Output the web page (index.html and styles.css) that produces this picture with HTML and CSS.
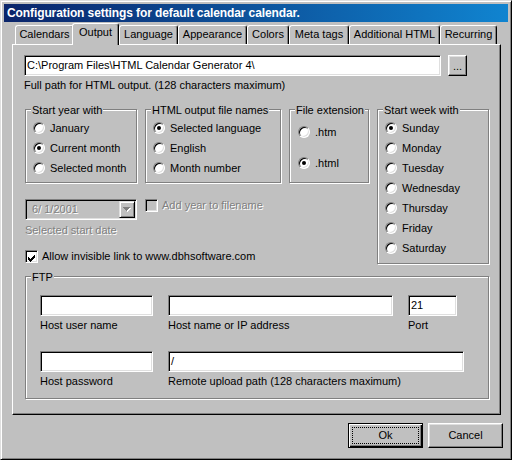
FILE: index.html
```html
<!DOCTYPE html>
<html>
<head>
<meta charset="utf-8">
<title>Configuration settings</title>
<link rel="stylesheet" href="styles.css">
</head>
<body>
<div class="window">
  <div class="titlebar">Configuration settings for default calendar calendar.</div>
  <div class="tabs">
    <div class="tab t1">Calendars</div>
    <div class="tab t2 sel">Output</div>
    <div class="tab t3">Language</div>
    <div class="tab t4">Appearance</div>
    <div class="tab t5">Colors</div>
    <div class="tab t6">Meta tags</div>
    <div class="tab t7">Additional HTML</div>
    <div class="tab t8">Recurring</div>
  </div>
  <div class="panel">
    <div class="path-row">
      <div class="field path">C:\Program Files\HTML Calendar Generator 4\</div>
      <div class="btn browse">...</div>
    </div>
    <div class="hint">Full path for HTML output. (128 characters maximum)</div>
    <div class="main">
      <div class="left">
        <div class="groups">
          <div class="group g-year">
            <div class="legend">Start year with</div>
            <div class="opt"><span class="radio"></span>January</div>
            <div class="opt"><span class="radio on"></span>Current month</div>
            <div class="opt"><span class="radio"></span>Selected month</div>
          </div>
          <div class="group g-html">
            <div class="legend">HTML output file names</div>
            <div class="opt"><span class="radio on"></span>Selected language</div>
            <div class="opt"><span class="radio"></span>English</div>
            <div class="opt"><span class="radio"></span>Month number</div>
          </div>
          <div class="group g-ext">
            <div class="legend">File extension</div>
            <div class="opt"><span class="radio"></span>.htm</div>
            <div class="opt"><span class="radio on"></span>.html</div>
          </div>
        </div>
        <div class="date-row">
          <div class="combo">
            <span class="dis">6/ 1/2001</span>
            <span class="combo-btn">
              <svg width="8" height="5" viewBox="0 0 8 5" shape-rendering="crispEdges">
                <path d="M1 1h7v1h-1v1h-1v1h-1v1h-1v-1h-1v-1h-1v-1h-1z" fill="#fff"/>
                <path d="M0 0h7v1h-1v1h-1v1h-1v1h-1v-1h-1v-1h-1v-1h-1z" fill="#808080"/>
              </svg>
            </span>
          </div>
          <div class="chk-line addyear"><span class="check off"></span><span class="dis">Add year to filename</span></div>
        </div>
        <div class="date-label dis">Selected start date</div>
        <div class="chk-line allow">
          <span class="check">
            <svg width="11" height="11" viewBox="0 0 11 11" shape-rendering="crispEdges">
              <path d="M2 6h1v3h-1zM3 7h1v3h-1zM4 8h1v3h-1zM5 7h1v3h-1zM6 6h1v3h-1zM7 5h1v3h-1zM8 4h1v3h-1z" fill="#000"/>
            </svg>
          </span>
          Allow invisible link to www.dbhsoftware.com
        </div>
      </div>
      <div class="group g-week">
        <div class="legend">Start week with</div>
        <div class="opt"><span class="radio on"></span>Sunday</div>
        <div class="opt"><span class="radio"></span>Monday</div>
        <div class="opt"><span class="radio"></span>Tuesday</div>
        <div class="opt"><span class="radio"></span>Wednesday</div>
        <div class="opt"><span class="radio"></span>Thursday</div>
        <div class="opt"><span class="radio"></span>Friday</div>
        <div class="opt"><span class="radio"></span>Saturday</div>
      </div>
    </div>
    <div class="group ftp">
      <div class="legend">FTP</div>
      <div class="frow first">
        <div class="fcell"><div class="field w-user"></div><div class="flabel">Host user name</div></div>
        <div class="fcell"><div class="field w-host"></div><div class="flabel">Host name or IP address</div></div>
        <div class="fcell"><div class="field w-port">21</div><div class="flabel">Port</div></div>
      </div>
      <div class="frow second">
        <div class="fcell"><div class="field w-user"></div><div class="flabel">Host password</div></div>
        <div class="fcell"><div class="field w-path">/</div><div class="flabel">Remote upload path (128 characters maximum)</div></div>
      </div>
    </div>
  </div>
  <div class="buttons">
    <div class="btn default"><span class="focus">Ok</span></div>
    <div class="btn">Cancel</div>
  </div>
</div>
</body>
</html>
```
FILE: styles.css
```css
* { box-sizing: border-box; }
html, body { margin: 0; padding: 0; }
body {
  width: 512px;
  height: 460px;
  overflow: hidden;
  background: #c0c0c0;
  font-family: "Liberation Sans", Arial, sans-serif;
  font-size: 11px;
  line-height: 13px;
  color: #000;
}
.window {
  width: 512px;
  height: 460px;
  display: flex;
  flex-direction: column;
  border: 1px solid;
  border-color: #dfdfdf #000 #000 #dfdfdf;
  box-shadow: inset 1px 1px 0 #fff, inset -1px -1px 0 #808080;
  padding: 3px;
}
.titlebar {
  flex: none;
  height: 18px;
  line-height: 18px;
  padding-left: 3px;
  background: linear-gradient(90deg, #0a246a, #1084d0);
  color: #fff;
  font-weight: bold;
  font-size: 12px;
  letter-spacing: -0.1px;
  white-space: nowrap;
  overflow: hidden;
}
.tabs {
  flex: none;
  height: 22px;
  display: flex;
  align-items: flex-end;
  padding-left: 11px;
}
.tab {
  flex: none;
  height: 19px;
  padding-top: 2px;
  text-align: center;
  white-space: nowrap;
  border: 1px solid #fff;
  border-bottom: none;
  border-right-color: #000;
  border-radius: 3px 3px 0 0;
  box-shadow: inset -1px 0 0 #808080;
  background: #c0c0c0;
}
.tab.sel {
  height: 22px;
  margin-bottom: -1px;
  margin-left: -2px;
  position: relative;
  z-index: 1;
}
.t1 { width: 59px; }
.t2 { width: 47px; }
.t3 { width: 59px; }
.t4 { width: 69px; }
.t5 { width: 42px; }
.t6 { width: 60px; }
.t7 { width: 91px; }
.t8 { width: 57px; }

.panel {
  flex: none;
  width: 489px;
  height: 371px;
  margin-left: 8px;
  border: 1px solid;
  border-color: #fff #000 #000 #fff;
  box-shadow: inset -1px -1px 0 #808080;
  padding: 10px 0 0 11px;
}
.field {
  height: 21px;
  background: #fff;
  border: 1px solid;
  border-color: #808080 #fff #fff #808080;
  box-shadow: inset 1px 1px 0 #000, inset -1px -1px 0 #dfdfdf;
  padding: 0 2px;
  line-height: 19px;
  white-space: nowrap;
  overflow: hidden;
}
.path-row { display: flex; gap: 7px; }
.path { width: 417px; }
.btn {
  flex: none;
  display: flex;
  align-items: center;
  justify-content: center;
  border: 1px solid;
  border-color: #fff #000 #000 #fff;
  box-shadow: inset -1px -1px 0 #808080, inset 1px 1px 0 #dfdfdf;
  background: #c0c0c0;
}
.browse { width: 19px; height: 21px; padding-top: 2px; }
.hint { margin-top: 3px; }

.main { display: flex; gap: 8px; margin-top: 17px; margin-left: 1px; }
.left { width: 344px; display: flex; flex-direction: column; }
.groups { display: flex; gap: 8px; height: 74px; }
.group {
  display: flex;
  flex-direction: column;
  border: 1px solid #808080;
  box-shadow: inset 1px 1px 0 #fff, 1px 1px 0 #fff;
  padding-left: 7px;
}
.legend {
  align-self: flex-start;
  margin: -6px 0 1px -2px;
  padding: 0 1px;
  background: #c0c0c0;
  white-space: nowrap;
}
.g-year { width: 112px; }
.g-html { width: 136px; }
.g-ext { width: 80px; padding-left: 8px; }
.g-ext .legend { margin-left: -3px; margin-bottom: 5px; }
.g-ext .opt + .opt { margin-top: 11px; }
.g-week { width: 112px; height: 155px; }

.opt {
  height: 20px;
  display: flex;
  align-items: center;
  gap: 5px;
  white-space: nowrap;
}
.radio {
  flex: none;
  width: 12px;
  height: 12px;
  border-radius: 50%;
  background: #fff;
  border: 1px solid;
  border-color: #808080 #fff #fff #808080;
  box-shadow: inset 1px 1px 0 #000, inset -1px -1px 0 #dfdfdf;
  display: flex;
  align-items: center;
  justify-content: center;
}
.radio.on::after {
  content: "";
  width: 4px;
  height: 4px;
  border-radius: 50%;
  background: #000;
}
.check {
  flex: none;
  width: 13px;
  height: 13px;
  background: #fff;
  border: 1px solid;
  border-color: #808080 #fff #fff #808080;
  box-shadow: inset 1px 1px 0 #000, inset -1px -1px 0 #dfdfdf;
  display: flex;
}
.check.off { background: #c0c0c0; }
.check svg { display: block; }
.dis { color: #808080; text-shadow: 1px 1px 0 #fff; }

.date-row { display: flex; align-items: flex-start; margin-top: 16px; }
.combo {
  width: 112px;
  height: 21px;
  display: flex;
  align-items: center;
  justify-content: space-between;
  border: 1px solid;
  border-color: #808080 #fff #fff #808080;
  box-shadow: inset 1px 1px 0 #000, inset -1px -1px 0 #dfdfdf;
  padding: 1px 1px 1px 6px;
  background: #c0c0c0;
}
.combo-btn {
  width: 16px;
  height: 17px;
  display: flex;
  align-items: center;
  justify-content: center;
  border: 1px solid;
  border-color: #dfdfdf #000 #000 #dfdfdf;
  box-shadow: inset 1px 1px 0 #fff, inset -1px -1px 0 #808080;
}
.combo-btn svg { display: block; }
.chk-line {
  height: 13px;
  display: flex;
  align-items: center;
  gap: 4px;
  white-space: nowrap;
}
.addyear { margin-left: 8px; }
.date-label { margin-top: 4px; }
.allow { margin-top: 13px; }

.ftp {
  width: 464px;
  height: 123px;
  margin-top: 12px;
  margin-left: 1px;
  padding-left: 14px;
}
.ftp .legend { margin-left: -9px; }
.frow { display: flex; gap: 15px; }
.frow.first { margin-top: 10px; }
.frow.second { margin-top: 19px; }
.fcell { display: flex; flex-direction: column; }
.flabel { margin-top: 3px; white-space: nowrap; }
.w-user { width: 113px; }
.w-host { width: 225px; }
.w-port { width: 49px; }
.w-path { width: 296px; }

.buttons {
  display: flex;
  justify-content: flex-end;
  gap: 5px;
  margin-top: 8px;
  padding-right: 5px;
}
.buttons .btn { width: 75px; height: 25px; }
.btn.default {
  border-color: #000;
  box-shadow: inset 1px 1px 0 #fff, inset -1px -1px 0 #000, inset -2px -2px 0 #808080;
}
.focus {
  width: 67px;
  height: 17px;
  border: 1px dotted #000;
  display: flex;
  align-items: center;
  justify-content: center;
}
```
